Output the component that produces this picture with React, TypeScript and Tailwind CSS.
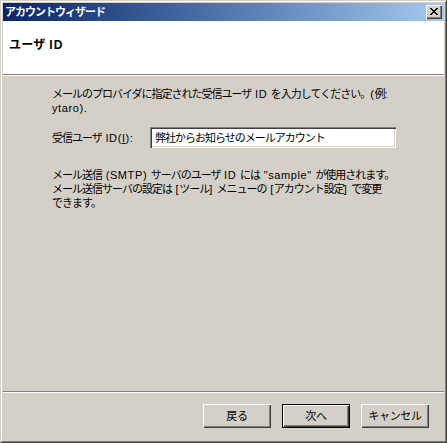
import React from "react";

const font = "font-['Liberation_Sans','Noto_Sans_CJK_JP',sans-serif]";

function L({ children }: { children: React.ReactNode }) {
  return <span className="tracking-[0.6px]">{children}</span>;
}

function Btn({ label, def }: { label: string; def?: boolean }) {
  return (
    <div
      className={
        "w-[68px] h-[24px] flex items-center justify-center text-[11px] tracking-[-0.3px] text-black bg-[#d4d0c8] " +
        (def
          ? "border border-black shadow-[inset_1px_1px_0_#fff,inset_-1px_-1px_0_#404040,inset_-2px_-2px_0_#808080]"
          : "shadow-[inset_1px_1px_0_#fff,inset_-1px_-1px_0_#404040,inset_-2px_-2px_0_#808080]")
      }
    >
      {label}
    </div>
  );
}

export default function App() {
  return (
    <div className={"w-[447px] h-[443px] bg-[#d4d0c8] " + font}>
      <div className="w-full h-full border border-t-[#d4d0c8] border-l-[#d4d0c8] border-r-[#404040] border-b-[#404040]">
        <div className="w-full h-full border border-t-white border-l-white border-r-[#808080] border-b-[#808080]">
          <div className="w-full h-full p-[1px] flex flex-col bg-[#d4d0c8]">
            {/* title bar */}
            <div className="h-[18px] shrink-0 flex items-center justify-between bg-gradient-to-r from-[#0a246a] to-[#a6caf0] pl-[2px] pr-[2px]">
              <span className="text-white font-bold text-[11px] tracking-[-1px] leading-none">
                アカウントウィザード
              </span>
              <div className="w-[16px] h-[14px] bg-[#d4d0c8] flex items-center justify-center shadow-[inset_1px_1px_0_#fff,inset_-1px_-1px_0_#404040,inset_-2px_-2px_0_#808080]">
                <svg width="8" height="7" viewBox="0 0 8 7" className="mb-[1px]">
                  <path d="M0 0h2v1h1v1h2V1h1V0h2v1H7v1H6v1H5v1h1v1h1v1h1v1H6V6H5V5H3v1H2v1H0V6h1V5h1V4h1V3H2V2H1V1H0z" fill="#000" />
                </svg>
              </div>
            </div>
            {/* header */}
            <div className="h-[53px] shrink-0 bg-white pl-[6px] pt-[11px]">
              <span className="text-[12px] font-bold text-black tracking-[0.3px] leading-[14px]">
                ユーザ <span className="tracking-[1px]">ID</span>
              </span>
            </div>
            <div className="h-[1px] shrink-0 bg-[#808080]" />
            <div className="h-[1px] shrink-0 bg-white" />
            {/* body */}
            <div className="flex-1 pl-[49px] pt-[11px] text-[11px] leading-[14px] text-black tracking-[-1px] whitespace-nowrap">
              <div>
                メールのプロバイダに指定された受信ユーザ<L> ID </L>を入力してください。<L>(</L>例<L>:</L>
                <br />
                <L>ytaro).</L>
              </div>
              <div className="flex items-center mt-[12px]">
                <span className="w-[98px]">
                  受信ユーザ<L> ID(<span className="underline">I</span>):</L>
                </span>
                <div className="w-[246px] h-[21px] bg-white flex items-center pl-[5px] shadow-[inset_1px_1px_0_#808080,inset_2px_2px_0_#404040,inset_-1px_-1px_0_#fff,inset_-2px_-2px_0_#d4d0c8]">
                  弊社からお知らせのメールアカウント
                </div>
              </div>
              <div className="mt-[20px]">
                メール送信<L> (SMTP) </L>サーバのユーザ<L> ID </L>には<L> "sample" </L>が使用されます。
                <br />
                メール送信サーバの設定は<L> [</L>ツール<L>] </L>メニューの<L> [</L>アカウント設定<L>] </L>で変更
                <br />
                できます。
              </div>
            </div>
            <div className="h-[1px] shrink-0 bg-[#808080]" />
            <div className="h-[1px] shrink-0 bg-white" />
            {/* footer */}
            <div className="h-[47px] shrink-0 flex justify-end items-start pt-[11px] pr-[15px] gap-[11px]">
              <Btn label="戻る" />
              <Btn label="次へ" def />
              <Btn label="キャンセル" />
            </div>
          </div>
        </div>
      </div>
    </div>
  );
}
